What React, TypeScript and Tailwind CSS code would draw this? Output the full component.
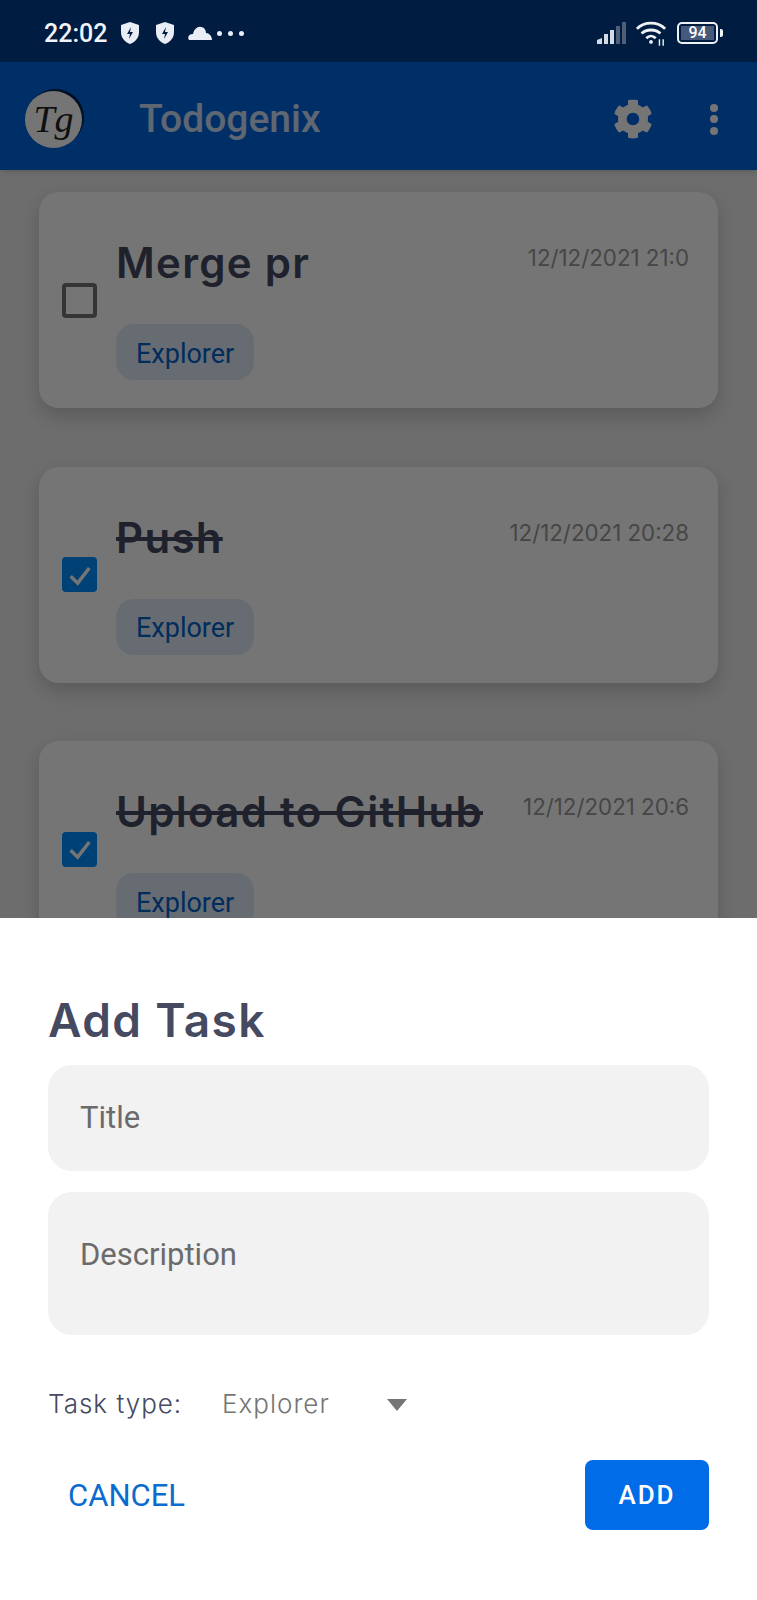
import React from 'react';
import { FaCog } from 'react-icons/fa';

const roboto = "font-['Roboto',sans-serif]";
const display = "font-['Inter',sans-serif]";

const tasks = [
  { title: 'Merge pr', date: '12/12/2021 21:0', done: false },
  { title: 'Push', date: '12/12/2021 20:28', done: true },
  { title: 'Upload to GitHub', date: '12/12/2021 20:6', done: true },
];

const Shield = () => (
  <svg viewBox="0 0 20 22" className="w-[20px] h-[22px]">
    <path d="M10 0 L19 3 V10 C19 16 15 20 10 22 C5 20 1 16 1 10 V3 Z" fill="#e9edf5" />
    <path d="M11 5 L7 12 H10 L9 17 L13 10 H10 Z" fill="#001c41" />
  </svg>
);

const StatusBar = () => (
  <div className="h-[62px] bg-[#001c41] flex items-center justify-between pl-[44px] pr-[34px] pt-[4px] shrink-0">
    <div className="flex items-center">
      <span className={`${roboto} text-[25px] font-medium text-[#f1f3f8] leading-none w-[76px]`}>22:02</span>
      <Shield />
      <div className="w-[15px]" />
      <Shield />
      <svg viewBox="0 0 24 14" className="w-[24px] h-[14px] ml-[13px]">
        <path d="M1 14 C-1 11 1 8 5 8 C6 3 10 0 13 1 C16 1 18 4 18 7 C21 7 24 10 24 14 Z" fill="#e9edf5" />
      </svg>
      <div className="flex gap-[6px] ml-[5px]">
        <div className="w-[5px] h-[5px] bg-[#e9edf5] rounded-full" />
        <div className="w-[5px] h-[5px] bg-[#e9edf5] rounded-full" />
        <div className="w-[5px] h-[5px] bg-[#e9edf5] rounded-full" />
      </div>
    </div>
    <div className="flex items-center">
      <svg viewBox="0 0 29 22" className="w-[29px] h-[22px]">
        <path d="M0 22 V18 L5 16 V22 Z" fill="#d5dae3" />
        <rect x="7" y="12" width="4" height="10" fill="#d5dae3" />
        <rect x="13" y="8" width="4" height="14" fill="#d5dae3" />
        <rect x="19" y="4" width="4" height="18" fill="#4f5f78" />
        <rect x="25" y="0" width="4" height="22" fill="#4f5f78" />
      </svg>
      <svg viewBox="0 0 32 26" className="w-[30px] h-[25px] ml-[10px]" fill="none" stroke="#eef1f6" strokeWidth="3">
        <path d="M1 8 C9 0 23 0 31 8" />
        <path d="M6 13 C11 8 21 8 26 13" />
        <path d="M11 18 C14 15 18 15 21 18" />
        <circle cx="16" cy="22" r="2" fill="#eef1f6" stroke="none" />
        <path d="M25 19 V26 M29 19 V26" strokeWidth="1.5" />
      </svg>
      <div className="ml-[11px] w-[41px] h-[22px] border-2 border-[#eef1f6] rounded-[5px] p-[2px] flex">
        <div className={`${roboto} flex-1 bg-[#46597a] text-white text-[16px] font-medium leading-[14px] text-center`}>94</div>
      </div>
      <div className="w-[3px] h-[8px] bg-[#eef1f6] ml-[2px] rounded-r-[2px]" />
    </div>
  </div>
);

const AppBar = () => (
  <div className="h-[108px] bg-[#0065e0] flex items-center pl-[25px] pr-[39px] pt-[6px] shrink-0 shadow-md">
    <div className="w-[57px] h-[57px] rounded-full bg-white shadow-[2px_-2px_0_#00224d] flex items-center justify-center">
      <span className="font-['Liberation_Serif',serif] italic text-[38px] text-[#222] leading-none">Tg</span>
    </div>
    <div className={`${roboto} ml-[57px] text-[39px] font-medium text-white/80 leading-none`}>Todogenix</div>
    <FaCog className="ml-auto w-[40px] h-[40px] text-white" />
    <div className="ml-[57px] flex flex-col gap-[3.5px]">
      <div className="w-[8px] h-[8px] rounded-full bg-white" />
      <div className="w-[8px] h-[8px] rounded-full bg-white" />
      <div className="w-[8px] h-[8px] rounded-full bg-white" />
    </div>
  </div>
);

const Checkbox = ({ done }: { done: boolean }) =>
  done ? (
    <div className="w-[35px] h-[35px] rounded-[4px] bg-[#0090ff] flex items-center justify-center shrink-0">
      <svg viewBox="0 0 24 24" className="w-[28px] h-[28px]" fill="none" stroke="white" strokeWidth="3">
        <path d="M4 13 L10 19 L20 6" />
      </svg>
    </div>
  ) : (
    <div className="w-[35px] h-[35px] rounded-[4px] border-[4px] border-[#737373] shrink-0" />
  );

const TaskCard = ({ title, date, done }: { title: string; date: string; done: boolean }) => (
  <div className="h-[216px] bg-white rounded-[20px] shadow-[0_8px_20px_rgba(0,0,0,0.18)] flex items-center pl-[23px] pr-[29px] shrink-0">
    <Checkbox done={done} />
    <div className="ml-[19px] flex-1 flex flex-col items-start self-start pt-[44px]">
      <div className="flex w-full justify-between items-start">
        <span className={`${display} text-[42px] tracking-[1.3px] font-semibold leading-[54px] text-[#454a61] ${done ? 'line-through' : ''}`}>{title}</span>
        <span className={`${display} text-[22.3px] leading-[32px] text-[#999] mt-[6px]`}>{date}</span>
      </div>
      <div className={`${roboto} mt-[34px] h-[56px] px-[20px] pt-[4px] rounded-[18px] bg-[#e0ecfa] text-[#0062c8] text-[27px] flex items-center`}>Explorer</div>
    </div>
  </div>
);

const AddTaskSheet = () => (
  <div className="absolute left-0 right-0 bottom-0 h-[682px] bg-white px-[48px] pt-[73px]">
    <div className={`${display} text-[46px] tracking-[1.4px] font-semibold leading-[58px] text-[#454a61]`}>Add Task</div>
    <div className={`${roboto} mt-[16px] h-[106px] rounded-[24px] bg-[#f2f2f2] flex items-center px-[32px] text-[31px] text-[#6b6b6b]`}>Title</div>
    <div className={`${roboto} mt-[21px] h-[143px] rounded-[24px] bg-[#f2f2f2] px-[32px] pt-[45px] text-[31px] leading-[36px] text-[#6b6b6b]`}>Description</div>
    <div className={`${display} mt-[50px] flex items-center text-[26px] tracking-[1px] font-light leading-[38px]`}>
      <span className="text-[#454a61] w-[174px]">Task type:</span>
      <span className="text-[#757575] w-[165px]">Explorer</span>
      <svg viewBox="0 0 20 12" className="w-[20px] h-[12px] mt-[2px]">
        <path d="M0 0 H20 L10 12 Z" fill="#757575" />
      </svg>
    </div>
    <div className="mt-[37px] flex items-center justify-between">
      <span className={`${roboto} ml-[20px] pt-[2px] text-[31px] text-[#0a6bd0]`}>CANCEL</span>
      <div className={`${roboto} w-[124px] h-[70px] rounded-[8px] bg-[#006ce8] text-white text-[26px] font-medium tracking-[2px] flex items-center justify-center`}>ADD</div>
    </div>
  </div>
);

const App: React.FC = () => {
  return (
    <div className="w-[757px] h-[1600px] flex flex-col overflow-hidden">
      <StatusBar />
      <div className="relative flex-1 flex flex-col bg-[#eeeeee] overflow-hidden">
        <AppBar />
        <div className="flex flex-col gap-[58.5px] px-[39px] pt-[22px]">
          {tasks.map((task, index) => (
            <TaskCard key={index} {...task} />
          ))}
        </div>
        <div className="absolute inset-0 bg-black/[0.54]" />
        <AddTaskSheet />
      </div>
    </div>
  );
};

export default App;
